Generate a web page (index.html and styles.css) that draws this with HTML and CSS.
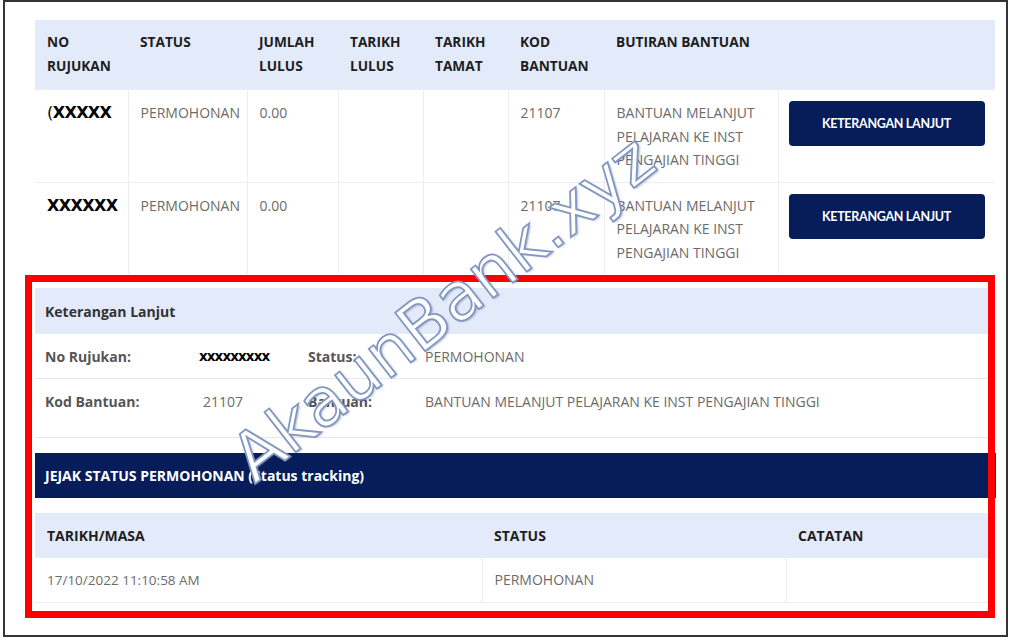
FILE: index.html
```html
<!DOCTYPE html>
<html lang="ms">
<head>
<meta charset="utf-8">
<title>Permohonan</title>
<link rel="stylesheet" href="styles.css">
</head>
<body>
<div class="frame">
  <table class="apps">
    <colgroup>
      <col class="c1"><col class="c2"><col class="c3"><col class="c4"><col class="c5"><col class="c6"><col class="c7"><col class="c8">
    </colgroup>
    <thead>
      <tr>
        <th>NO RUJUKAN</th>
        <th>STATUS</th>
        <th>JUMLAH LULUS</th>
        <th>TARIKH LULUS</th>
        <th>TARIKH TAMAT</th>
        <th>KOD BANTUAN</th>
        <th>BUTIRAN BANTUAN</th>
        <th></th>
      </tr>
    </thead>
    <tbody>
      <tr>
        <td><span class="redact"><span class="thin">(</span>XXXXX</span></td>
        <td>PERMOHONAN</td>
        <td>0.00</td>
        <td></td>
        <td></td>
        <td>21107</td>
        <td>BANTUAN MELANJUT PELAJARAN KE INST PENGAJIAN TINGGI</td>
        <td class="act"><button class="btn" type="button">KETERANGAN LANJUT</button></td>
      </tr>
      <tr>
        <td><span class="redact">XXXXXX</span></td>
        <td>PERMOHONAN</td>
        <td>0.00</td>
        <td></td>
        <td></td>
        <td>21107</td>
        <td>BANTUAN MELANJUT PELAJARAN KE INST PENGAJIAN TINGGI</td>
        <td class="act"><button class="btn" type="button">KETERANGAN LANJUT</button></td>
      </tr>
    </tbody>
  </table>

  <section class="detail">
    <div class="detail-head">Keterangan Lanjut</div>
    <div class="detail-row">
      <span class="label">No Rujukan:</span>
      <span class="redact-sm">xxxxxxxxx</span>
      <span class="label">Status:</span>
      <span class="value">PERMOHONAN</span>
    </div>
    <div class="detail-row tall">
      <span class="label">Kod Bantuan:</span>
      <span class="value shift">21107</span>
      <span class="label">Bantuan:</span>
      <span class="value">BANTUAN MELANJUT PELAJARAN KE INST PENGAJIAN TINGGI</span>
    </div>
  </section>

  <div class="track-bar">JEJAK STATUS PERMOHONAN (Status tracking)</div>

  <table class="track">
    <colgroup><col class="t1"><col class="t2"><col class="t3"></colgroup>
    <thead>
      <tr><th>TARIKH/MASA</th><th>STATUS</th><th>CATATAN</th></tr>
    </thead>
    <tbody>
      <tr><td class="date">17/10/2022 11:10:58 AM</td><td>PERMOHONAN</td><td></td></tr>
    </tbody>
  </table>

  <div class="annot"></div>
  <div class="wm">AkaunBank.xyz</div>
</div>
</body>
</html>
```

FILE: styles.css
```css
* { box-sizing: border-box; }

html, body {
  margin: 0;
  background: #ffffff;
}

body {
  width: 1012px;
  height: 641px;
  overflow: hidden;
  font-family: "Open Sans", "Noto Sans", sans-serif;
  font-size: 14px;
  color: #6b6b6b;
}

.frame {
  position: relative;
  margin: 0 4px 0 3px;
  height: 637px;
  border: 2px solid #343434;
  padding: 18px 11px 0 30px;
  overflow: hidden;
}

/* main table */
.apps {
  width: 960px;
  border-collapse: collapse;
  table-layout: fixed;
}
.c1 { width: 93px; }
.c2 { width: 119px; }
.c3 { width: 91px; }
.c4 { width: 85px; }
.c5 { width: 85px; }
.c6 { width: 96px; }
.c7 { width: 174px; }
.c8 { width: 217px; }

.apps th {
  background: #e3eafa;
  text-align: left;
  vertical-align: top;
  font-weight: 700;
  font-size: 13.7px;
  color: #1e1e1e;
  line-height: 24px;
  padding: 10px 12px 11px;
}

.apps td {
  vertical-align: top;
  padding: 11px 12px 10px;
  line-height: 23.5px;
  color: #6b6b6b;
  border-top: 1px solid #ededed;
  border-left: 1px solid #ededed;
}
.apps td:first-child { border-left: none; }

.apps td.act { padding: 11px 11px 10px 10px; }

.redact {
  font-family: "DejaVu Sans", sans-serif;
  font-weight: 700;
  font-size: 16px;
  letter-spacing: -0.6px;
  color: #000;
}
.thin { font-weight: 400; }

.btn {
  display: block;
  width: 196px;
  height: 45px;
  border: 0;
  border-radius: 4px;
  background: #061d5a;
  color: #fff;
  font-family: Lato, "Open Sans", sans-serif;
  font-weight: 700;
  font-size: 12.5px;
  letter-spacing: -0.3px;
  padding: 0;
}

/* detail section */
.detail { margin-top: 14px; }

.detail-head {
  background: #e3eafa;
  height: 46px;
  padding: 0 10px;
  display: flex;
  align-items: center;
  font-weight: 700;
  color: #333;
}

.detail-row {
  display: grid;
  grid-template-columns: 154px 109px 117px 1fr;
  align-items: center;
  height: 45px;
  padding: 0 10px;
  border-bottom: 1px solid #e8e8e8;
}
.detail-row.tall {
  height: 59px;
  align-items: start;
  padding-top: 13px;
}

.label { font-weight: 700; color: #555; }
.value { color: #6b6b6b; }
.shift { padding-left: 4px; }

.redact-sm {
  font-family: "DejaVu Sans", sans-serif;
  font-weight: 700;
  font-size: 13.5px;
  letter-spacing: -0.9px;
  color: #000;
}

.track-bar {
  margin-top: 15px;
  height: 45px;
  width: 961px;
  background: #061d5a;
  color: #fff;
  font-weight: 700;
  padding: 0 10px;
  display: flex;
  align-items: center;
}

/* tracking table */
.track {
  margin-top: 15px;
  width: 960px;
  border-collapse: collapse;
  table-layout: fixed;
}
.t1 { width: 447px; }
.t2 { width: 304px; }
.t3 { width: 209px; }

.track th {
  background: #e3eafa;
  text-align: left;
  font-weight: 700;
  color: #1e1e1e;
  height: 45px;
  padding: 0 12px;
}
.track td {
  height: 44px;
  padding: 0 12px;
  color: #6b6b6b;
  border-left: 1px solid #ededed;
  border-bottom: 1px solid #ededed;
}
.track td:first-child { border-left: none; }
.track td.date { font-size: 13.5px; }

/* annotation overlay */
.annot {
  position: absolute;
  left: 20px;
  top: 273px;
  width: 970px;
  height: 343px;
  border: 7px solid #ff0000;
  pointer-events: none;
}

.wm {
  position: absolute;
  left: 438px;
  top: 306px;
  transform: translate(-50%, -50%) rotate(-38deg);
  font-family: "DejaVu Sans", sans-serif;
  font-size: 67px;
  color: #ffffff;
  -webkit-text-stroke: 1.8px #8297c2;
  text-shadow: 1px 2px 2px rgba(60, 80, 130, 0.35);
  white-space: nowrap;
  pointer-events: none;
}
```
